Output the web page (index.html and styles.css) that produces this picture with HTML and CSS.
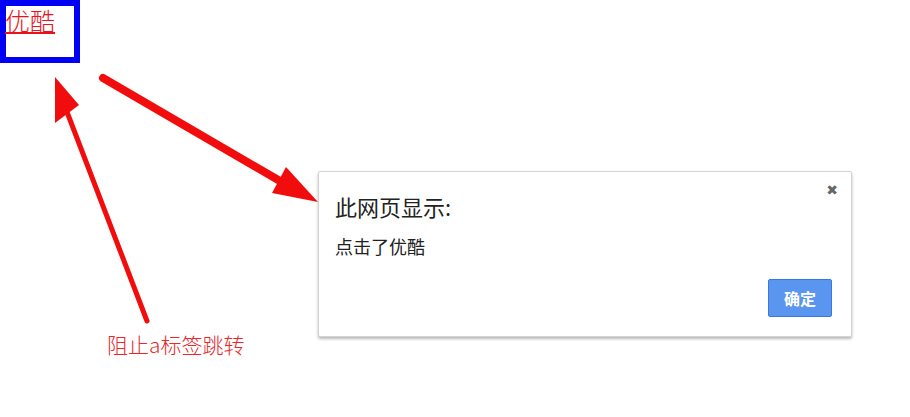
FILE: index.html
```html
<!DOCTYPE html>
<html lang="zh">
<head>
<meta charset="utf-8">
<title>阻止a标签跳转</title>
<link rel="stylesheet" href="styles.css">
</head>
<body>
<div class="page">
  <div class="linkbox"><a class="yk" href="#">优酷</a></div>

  <svg class="arrows" width="910" height="417" viewBox="0 0 910 417" aria-hidden="true">
    <line x1="147" y1="321" x2="67" y2="112" stroke="#f10d0d" stroke-width="5" stroke-linecap="round"/>
    <polygon points="55,77 55,123 79,105" fill="#f10d0d"/>
    <line x1="103" y1="78" x2="280" y2="181" stroke="#f10d0d" stroke-width="8" stroke-linecap="round"/>
    <polygon points="318,202 286,167 272,193" fill="#f10d0d"/>
  </svg>

  <p class="note">阻止a标签跳转</p>

  <div class="dialog">
    <div class="dialog-close">&#x2716;</div>
    <div class="dialog-title">此网页显示:</div>
    <div class="dialog-msg">点击了优酷</div>
    <div class="dialog-actions">
      <button class="btn-ok">确定</button>
    </div>
  </div>
</div>
</body>
</html>
```

FILE: styles.css
```css
html, body {
  margin: 0;
  padding: 0;
  background: #ffffff;
}

.page {
  position: relative;
  width: 910px;
  height: 417px;
  overflow: hidden;
  font-family: "Noto Sans CJK SC", "Noto Sans", sans-serif;
}

.linkbox {
  width: 68px;
  height: 51px;
  border: 6px solid #0000f5;
  box-sizing: content-box;
}

.yk {
  display: inline-block;
  margin-left: -1px;
  margin-top: 0;
  font-family: "Noto Sans CJK SC", sans-serif;
  font-weight: 300;
  font-size: 25px;
  line-height: 28px;
  color: #e8141c;
  text-decoration: underline;
  text-decoration-thickness: 2px;
  text-underline-offset: 1px;
}

.arrows {
  position: absolute;
  left: 0;
  top: 0;
  pointer-events: none;
}

.note {
  position: absolute;
  left: 107px;
  top: 331px;
  margin: 0;
  font-family: "Noto Sans CJK SC", sans-serif;
  font-weight: 300;
  font-size: 21px;
  line-height: 26px;
  color: #e8262b;
}

.dialog {
  position: absolute;
  left: 318px;
  top: 171px;
  width: 534px;
  height: 166px;
  border: 1px solid #d4d4d4;
  border-radius: 2px;
  background: #fff;
  box-shadow: 0 2px 3px rgba(0, 0, 0, 0.28);
  display: flex;
  flex-direction: column;
  padding: 0 19px 0 16px;
  box-sizing: border-box;
}

.dialog-close {
  position: absolute;
  right: 13px;
  top: 10px;
  font-size: 14px;
  color: #666;
  font-family: "DejaVu Sans", sans-serif;
}

.dialog-title {
  margin-top: 19px;
  font-size: 22px;
  line-height: 30px;
  color: #222;
}

.dialog-msg {
  margin-top: 13px;
  font-size: 18px;
  line-height: 24px;
  color: #222;
}

.dialog-actions {
  display: flex;
  justify-content: flex-end;
  margin-top: 21px;
}

.btn-ok {
  width: 64px;
  height: 38px;
  border: 1px solid #3a78dd;
  border-radius: 2px;
  background: #5a95ef;
  color: #fff;
  font-family: "Noto Sans CJK SC", sans-serif;
  font-weight: 700;
  font-size: 16px;
  padding: 0;
}
```
